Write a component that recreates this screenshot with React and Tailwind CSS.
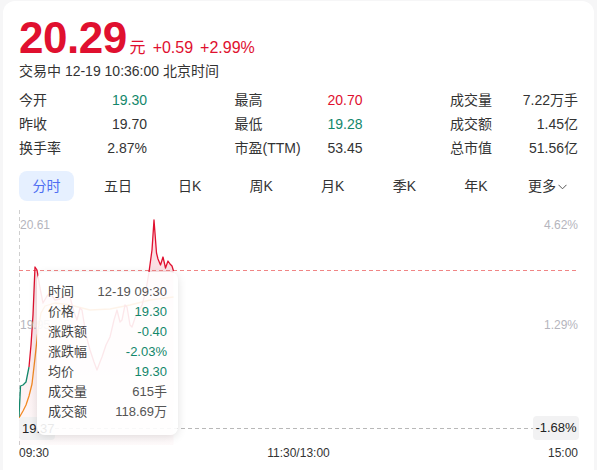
import React from "react";

const RED = "#e0102f";
const GREEN = "#13876b";

const stats = [
  [
    ["今开", "19.30", GREEN],
    ["最高", "20.70", RED],
    ["成交量", "7.22万手", "#333"],
  ],
  [
    ["昨收", "19.70", "#333"],
    ["最低", "19.28", GREEN],
    ["成交额", "1.45亿", "#333"],
  ],
  [
    ["换手率", "2.87%", "#333"],
    ["市盈(TTM)", "53.45", "#333"],
    ["总市值", "51.56亿", "#333"],
  ],
];

const tabs = ["分时", "五日", "日K", "周K", "月K", "季K", "年K"];

const OX = 19;
const OY = 205;
const toPath = (pts) =>
  pts.map((p, i) => `${i ? "L" : "M"}${(p[0] - OX).toFixed(1)} ${(p[1] - OY).toFixed(1)}`).join(" ");

const greenPts = [
  [19, 417], [20.5, 386], [23, 385], [26, 382], [29, 367],
];
const redPts = [
  [29, 367], [31, 345], [33, 315], [35, 267], [37, 270], [40, 288], [43, 303], [47, 296], [50, 293],
  [55, 300], [60, 299], [65, 295], [70, 297], [74, 312], [77, 320], [80, 308], [82, 310],
  [86, 335], [90, 350], [94, 362], [97, 370], [100, 362], [102, 357], [106, 345], [110, 337],
  [114, 320], [117, 310], [120, 322], [122, 320], [125, 305], [127, 307], [130, 325], [132, 327],
  [135, 318], [138, 313], [142, 305], [146, 290], [149, 272], [152, 250], [154, 220], [156.5, 253],
  [158, 259], [160.5, 265], [163, 257], [165.5, 268], [168, 261], [170, 264], [172, 266], [173.5, 271],
];
const avgPts = [
  [19, 418], [23, 411], [26, 405], [29, 396], [32, 384], [35, 358], [38, 330], [41, 313],
  [45, 306], [55, 303], [70, 305], [90, 310], [110, 309], [130, 305], [150, 300], [173.5, 297],
];

const allPrice = [...greenPts, ...redPts.slice(1)];
const fillPath =
  toPath(allPrice) + ` L${(173.5 - OX).toFixed(1)} 240 L0 240 Z`;

const tooltipRows = [
  ["时间", "12-19 09:30", "#555"],
  ["价格", "19.30", GREEN],
  ["涨跌额", "-0.40", GREEN],
  ["涨跌幅", "-2.03%", GREEN],
  ["均价", "19.30", GREEN],
  ["成交量", "615手", "#555"],
  ["成交额", "118.69万", "#555"],
];

export default function App() {
  return (
    <div
      className="h-[470px] w-[597px] overflow-hidden bg-[#f6f6f7] pt-[1px] pl-[3px] pr-[3px]"
      style={{ fontFamily: '"Liberation Sans", Arial, "Noto Sans CJK SC", sans-serif' }}
    >
      <div className="min-h-[490px] w-[591px] rounded-[12px] bg-white px-[16px] pt-[15px]">
        {/* Header */}
        <div className="flex h-[44px] items-baseline whitespace-nowrap">
          <span className="text-[44px] font-bold leading-[44px] tracking-[-0.5px]" style={{ color: RED }}>20.29</span>
          <span className="ml-[3px] text-[16px] leading-[16px]" style={{ color: RED }}>元</span>
          <span className="ml-[7px] text-[16px] leading-[16px]" style={{ color: RED }}>+0.59</span>
          <span className="ml-[7px] text-[16px] leading-[16px]" style={{ color: RED }}>+2.99%</span>
        </div>
        <div className="mt-[1px] text-[14px] leading-[20px] text-[#333]">交易中 12-19 10:36:00 北京时间</div>

        {/* Stats */}
        <div className="mt-[7px] flex flex-col">
          {stats.map((row, i) => (
            <div key={i} className="flex h-[24px] items-center justify-between text-[14px]">
              {row.map(([label, value, color]) => (
                <div key={label} className="flex w-[128px] items-center justify-between">
                  <span className="text-[#333]">{label}</span>
                  <span style={{ color }}>{value}</span>
                </div>
              ))}
            </div>
          ))}
        </div>

        {/* Tabs */}
        <div className="mt-[11px] flex items-center justify-between pr-[3px]">
          {tabs.map((t, i) => (
            <div
              key={t}
              className={
                i === 0
                  ? "flex h-[30px] w-[55px] items-center justify-center rounded-[8px] bg-[#e6f0ff] text-[14px] text-[#4f6ef2]"
                  : "flex h-[30px] w-[55px] items-center justify-center text-[14px] text-[#333]"
              }
            >
              {t}
            </div>
          ))}
          <div className="flex h-[30px] w-[55px] items-center justify-center gap-[2px] text-[14px] text-[#333]">
            <span>更多</span>
            <svg width="9" height="6" viewBox="0 0 9 6" className="mt-[1px]">
              <polyline points="0.5,0.8 4.5,4.8 8.5,0.8" fill="none" stroke="#555" strokeWidth="1" />
            </svg>
          </div>
        </div>

        {/* Chart */}
        <div className="relative mt-[4px] h-[240px] w-[559px]">
          <svg className="absolute left-0 top-0" width="559" height="240" viewBox="0 0 559 240">
            <defs>
              <linearGradient id="fillg" x1="0" y1="0" x2="0" y2="1">
                <stop offset="0" stopColor="#e0102f" stopOpacity="0.16" />
                <stop offset="1" stopColor="#e0102f" stopOpacity="0.02" />
              </linearGradient>
            </defs>
            <line x1="0.5" y1="5" x2="0.5" y2="240" stroke="#cfcfcf" strokeWidth="1" strokeDasharray="4 3" />
            <path d={fillPath} fill="url(#fillg)" stroke="none" />
            <line x1="0" y1="65.5" x2="559" y2="65.5" stroke="#f08585" strokeWidth="1" strokeDasharray="4 3" />
            <line x1="36" y1="223.5" x2="514" y2="223.5" stroke="#b8b8b8" strokeWidth="1" strokeDasharray="4 3" />
            <path d={toPath(avgPts)} fill="none" stroke="#f28a25" strokeWidth="1.3" strokeLinejoin="round" />
            <path d={toPath(greenPts)} fill="none" stroke="#13876b" strokeWidth="1.3" strokeLinejoin="round" />
            <path d={toPath(redPts)} fill="none" stroke="#e0102f" strokeWidth="1.3" strokeLinejoin="round" />
          </svg>

          <div className="absolute left-[1px] top-[13px] text-[12px] leading-[14px] text-[#b5b5bd]">20.61</div>
          <div className="absolute right-0 top-[13px] text-[12px] leading-[14px] text-[#b5b5bd]">4.62%</div>
          <div className="absolute left-[1px] top-[113px] text-[12px] leading-[14px] text-[#b5b5bd]">19.95</div>
          <div className="absolute right-0 top-[113px] text-[12px] leading-[14px] text-[#b5b5bd]">1.29%</div>

          <div className="absolute left-0 top-[212px] flex h-[23px] w-[36px] items-center rounded-[4px] bg-[#f2f2f3] pl-[3px] text-[13px] text-[#222]">19.37</div>
          <div className="absolute right-[-1px] top-[211px] flex h-[24px] w-[46px] items-center justify-center rounded-[4px] bg-[#f2f2f3] text-[13px] text-[#222]">-1.68%</div>

          {/* Tooltip */}
          <div className="absolute left-[18px] top-[67px] w-[141px] rounded-[8px] bg-white/90 px-[11px] pb-[13px] pt-[10px] shadow-[0_2px_10px_rgba(0,0,0,0.12)]">
            {tooltipRows.map(([l, v, c]) => (
              <div key={l} className="flex h-[20px] items-center justify-between text-[13px]">
                <span className="text-[#444]">{l}</span>
                <span style={{ color: c }}>{v}</span>
              </div>
            ))}
          </div>
        </div>

        {/* X axis */}
        <div className="flex h-[16px] w-[559px] items-center justify-between text-[12px] leading-[16px] text-[#333]">
          <span>09:30</span>
          <span>11:30/13:00</span>
          <span>15:00</span>
        </div>
      </div>
    </div>
  );
}
